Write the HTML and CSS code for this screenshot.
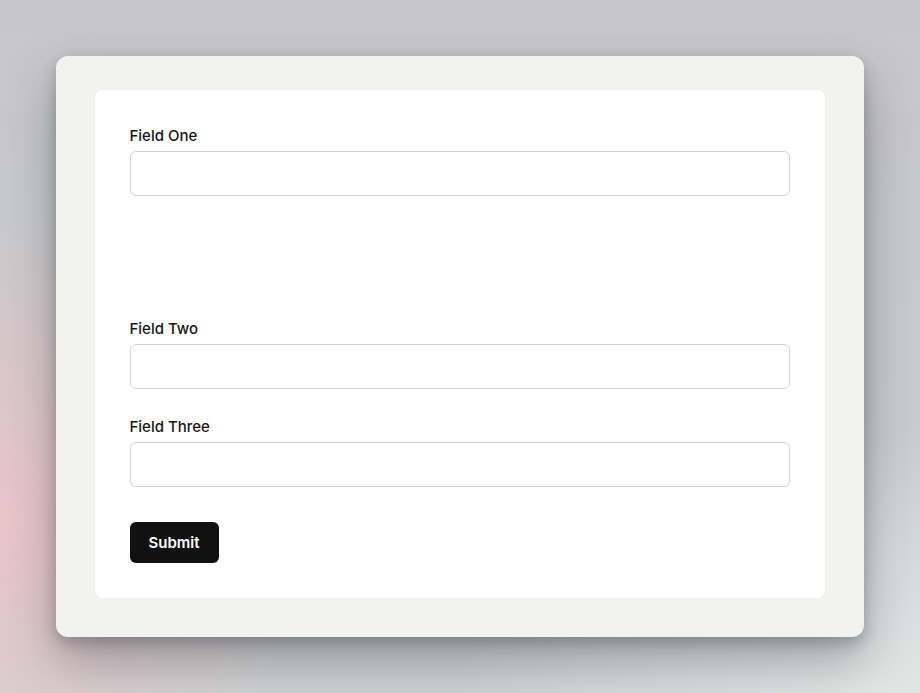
FILE: index.html
```html
<!DOCTYPE html>
<html lang="en">
<head>
    <meta charset="UTF-8">
    <meta name="viewport" content="width=device-width, initial-scale=1.0">
    <title>Form</title>
    <link rel="stylesheet" href="styles.css">
</head>
<body>

<div class="frame">
    <div class="panel">
        <form class="form">
            <div class="field">
                <label for="fieldOne">Field One</label>
                <input type="text" id="fieldOne" name="fieldOne">
            </div>

            <div class="spacer"></div>

            <div class="field">
                <label for="fieldTwo">Field Two</label>
                <input type="text" id="fieldTwo" name="fieldTwo">
            </div>

            <div class="field">
                <label for="fieldThree">Field Three</label>
                <input type="text" id="fieldThree" name="fieldThree">
            </div>

            <button type="submit" class="submit-btn">Submit</button>
        </form>
    </div>
</div>

</body>
</html>
```

FILE: styles.css
```css
html, body {
    height: 100%;
}

body {
    margin: 0;
    font-family: Inter, "Noto Sans", sans-serif;
    background-color: #c9cacc;
    background-image:
        radial-gradient(ellipse 320px 300px at 0px 520px, rgba(236, 196, 200, 0.95), rgba(236, 196, 200, 0) 100%),
        radial-gradient(ellipse 420px 260px at 880px 693px, rgba(224, 232, 230, 0.95), rgba(224, 232, 230, 0) 100%),
        linear-gradient(180deg, #c7c7c9 0%, #c9cbcd 60%, #cfd2d3 100%);
    padding: 56px;
    box-sizing: border-box;
}

.frame {
    width: 808px;
    height: 581px;
    box-sizing: border-box;
    background-color: #f2f2f0;
    border-radius: 12px;
    padding: 34px 39px 39px;
    box-shadow: 0 6px 14px rgba(40, 45, 50, 0.25), 0 24px 50px rgba(40, 45, 50, 0.35);
}

.panel {
    background-color: #fff;
    border-radius: 8px;
    padding: 35px 35px 35px 34.5px;
    height: 100%;
    box-sizing: border-box;
}

.form {
    display: flex;
    flex-direction: column;
    gap: 27px;
}

.field {
    display: flex;
    flex-direction: column;
    gap: 6px;
}

.field label {
    font-size: 15px;
    line-height: 20px;
    font-weight: 450;
    color: #161616;
    padding-top: 1px;
    margin-bottom: -1px;
}

.field input {
    height: 45px;
    width: 100%;
    box-sizing: border-box;
    border: 1.5px solid #d3d3d7;
    border-radius: 6px;
    padding: 0 12px;
    font-size: 15px;
    font-family: inherit;
    background: #fff;
}

.spacer {
    height: 68px;
}

.submit-btn {
    align-self: flex-start;
    margin-top: 8px;
    width: 89px;
    height: 41px;
    background-color: #111;
    color: #fff;
    border: none;
    border-radius: 6px;
    font-family: inherit;
    font-size: 15px;
    font-weight: 600;
    cursor: pointer;
}
```
